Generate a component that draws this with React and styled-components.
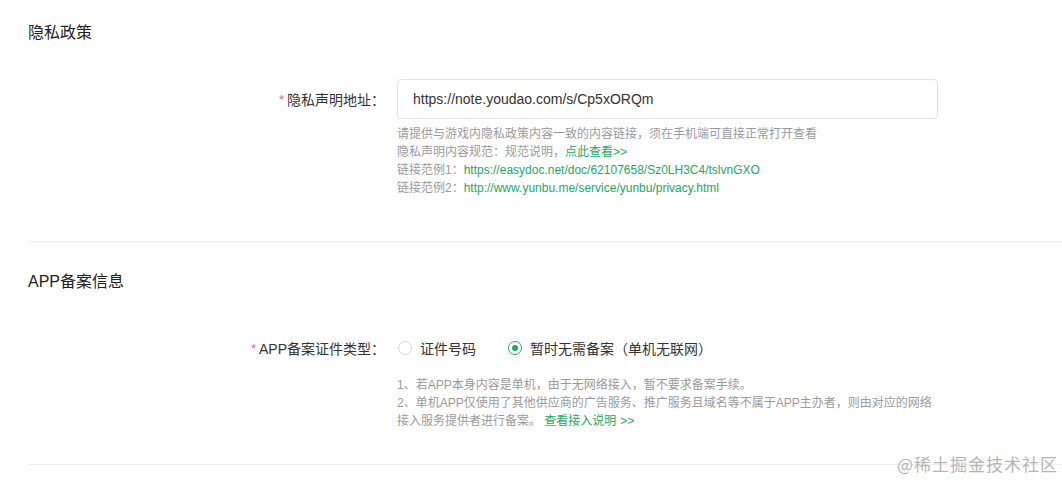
import React from "react";
import styled, { createGlobalStyle } from "styled-components";

const GREEN = "#22a95f";

const Global = createGlobalStyle`
  html, body { margin: 0; padding: 0; background: #fff; overflow: hidden; }
  body { font-family: "Liberation Sans", Arial, "Noto Sans CJK SC", sans-serif; color: #333; }
  #root { width: 1062px; height: 483px; position: relative; }
`;

const Page = styled.div`
  padding-left: 28px;
  position: relative;
  height: 483px;
  box-sizing: border-box;
`;

const Section = styled.section`
  padding-top: ${(p) => p.$top}px;
  padding-bottom: ${(p) => p.$bottom}px;
  border-bottom: 1px solid #eeeeee;
`;

const Title = styled.h2`
  margin: 0;
  font-size: 16px;
  font-weight: normal;
  line-height: 24px;
  color: #222;
`;

const FormRow = styled.div`
  display: grid;
  grid-template-columns: 357px 1fr;
  column-gap: 12px;
  margin-top: ${(p) => p.$mt}px;
`;

const Label = styled.label`
  display: flex;
  align-items: center;
  justify-content: flex-end;
  font-size: 14px;
  color: #333;
  height: ${(p) => p.$h}px;
`;

const Star = styled.span`
  color: #e0677f;
  margin-right: 3px;
  font-size: 13px;
`;

const Field = styled.div`
  display: flex;
  flex-direction: column;
`;

const Input = styled.input`
  box-sizing: border-box;
  width: 541px;
  height: 40px;
  border: 1px solid #e2e2e2;
  border-radius: 4px;
  padding: 0 15px;
  font-family: "Liberation Sans", Arial, sans-serif;
  font-size: 14px;
  color: #333;
  outline: none;
`;

const Help = styled.div`
  margin-top: ${(p) => p.$mt}px;
  font-size: 12px;
  line-height: 18px;
  color: #9a9a9a;
`;

const Link = styled.a`
  color: ${GREEN};
  text-decoration: none;
`;

const Arrow = styled.span`
  color: ${GREEN};
  margin-left: ${(p) => p.$ml || 0}px;
`;

const RadioGroup = styled.div`
  display: flex;
  align-items: center;
  height: 32px;
  gap: 32px;
  margin-left: 1px;
`;

const RadioItem = styled.span`
  display: flex;
  align-items: center;
  gap: 8px;
  font-size: 14px;
  color: #333;
`;

const Circle = styled.span`
  box-sizing: border-box;
  width: 14px;
  height: 14px;
  border-radius: 50%;
  border: 1px solid ${(p) => (p.$checked ? GREEN : "#d9d9d9")};
  display: flex;
  align-items: center;
  justify-content: center;
  &::after {
    content: "";
    width: 6px;
    height: 6px;
    border-radius: 50%;
    background: ${GREEN};
    display: ${(p) => (p.$checked ? "block" : "none")};
  }
`;

const Watermark = styled.div`
  position: absolute;
  right: 4px;
  bottom: 7px;
  font-size: 17px;
  color: #b5b5b5;
  font-family: "Noto Sans CJK SC", sans-serif;
  letter-spacing: 1px;
`;

export default function App() {
  return (
    <>
      <Global />
      <Page>
        <Section $top={21} $bottom={44}>
          <Title>隐私政策</Title>
          <FormRow $mt={34}>
            <Label $h={40}>
              <Star>*</Star>隐私声明地址：
            </Label>
            <Field>
              <Input defaultValue="https://note.youdao.com/s/Cp5xORQm" />
              <Help $mt={6}>
                请提供与游戏内隐私政策内容一致的内容链接，须在手机端可直接正常打开查看
                <br />
                隐私声明内容规范：规范说明，<Link>点此查看</Link>
                <Arrow>&gt;&gt;</Arrow>
                <br />
                链接范例1：<Link>https://easydoc.net/doc/62107658/Sz0LH3C4/tslvnGXO</Link>
                <br />
                链接范例2：<Link>http://www.yunbu.me/service/yunbu/privacy.html</Link>
              </Help>
            </Field>
          </FormRow>
        </Section>
        <Section $top={28} $bottom={34}>
          <Title>APP备案信息</Title>
          <FormRow $mt={38}>
            <Label $h={32}>
              <Star>*</Star>APP备案证件类型：
            </Label>
            <Field>
              <RadioGroup>
                <RadioItem>
                  <Circle />
                  证件号码
                </RadioItem>
                <RadioItem>
                  <Circle $checked />
                  暂时无需备案（单机无联网）
                </RadioItem>
              </RadioGroup>
              <Help $mt={12}>
                1、若APP本身内容是单机，由于无网络接入，暂不要求备案手续。
                <br />
                2、单机APP仅使用了其他供应商的广告服务、推广服务且域名等不属于APP主办者，则由对应的网络
                <br />
                接入服务提供者进行备案。 <Link>查看接入说明</Link>
                <Arrow $ml={4}>&gt;&gt;</Arrow>
              </Help>
            </Field>
          </FormRow>
        </Section>
        <Watermark>@稀土掘金技术社区</Watermark>
      </Page>
    </>
  );
}
